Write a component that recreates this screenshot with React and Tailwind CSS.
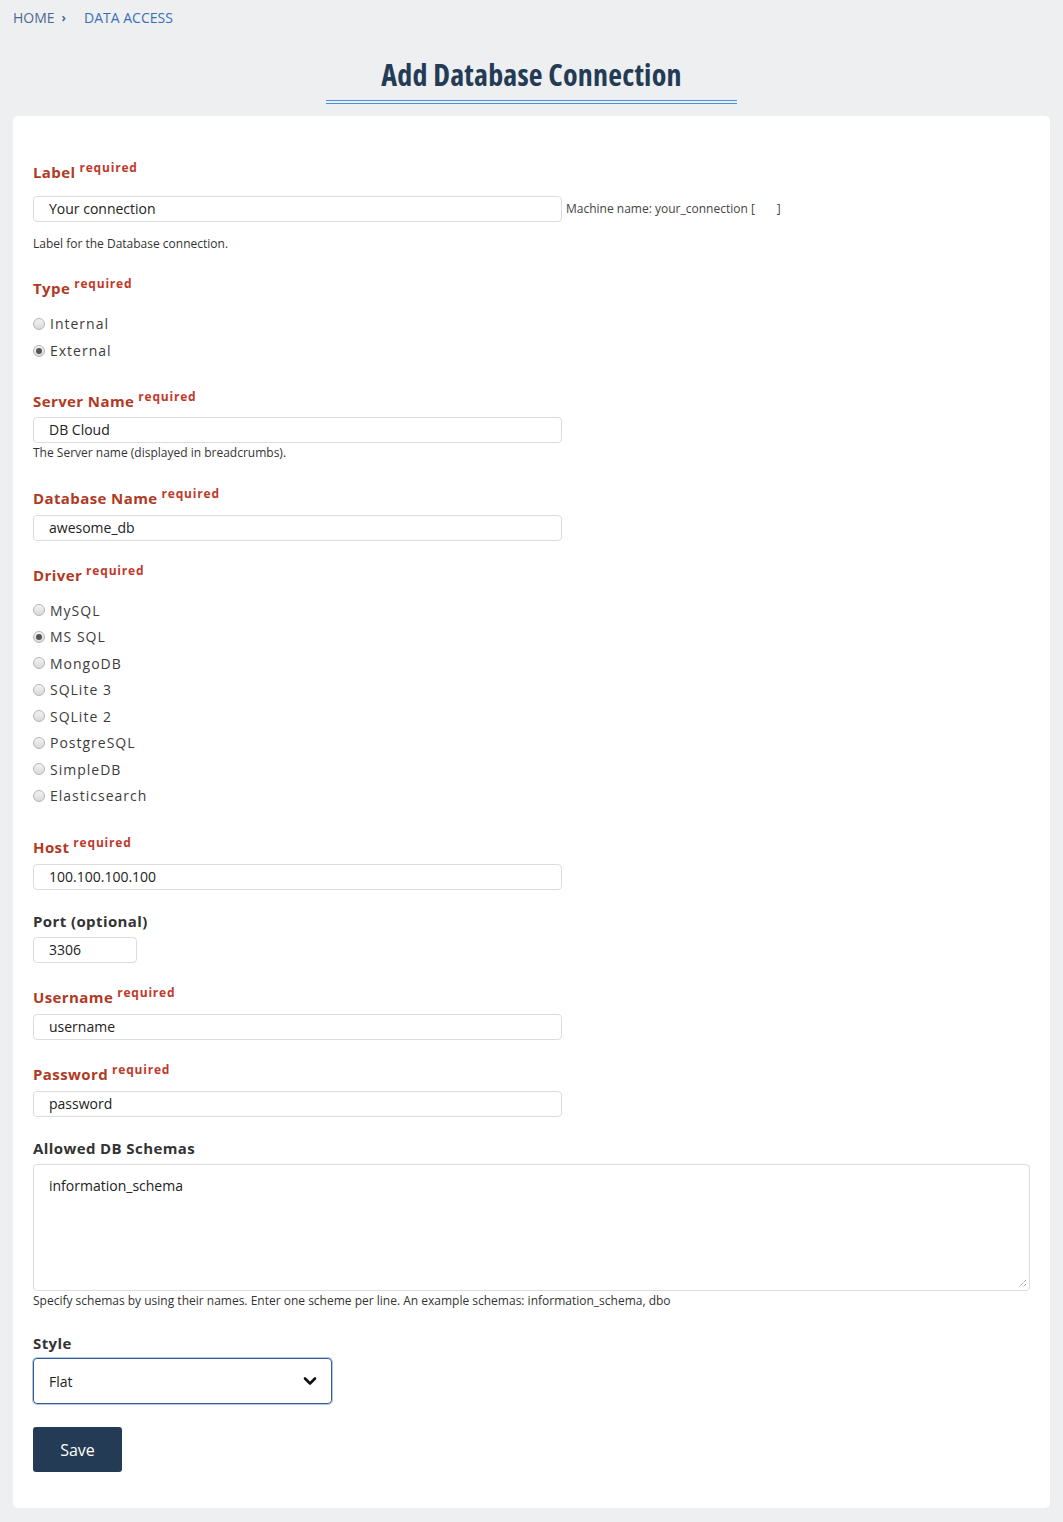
import React from "react";

const font = { fontFamily: '"Open Sans", "Liberation Sans", sans-serif' };

function Req() {
  return (
    <span className="ml-[4px] relative -top-[6px] text-[12px] font-bold tracking-[0.8px] text-[#c0392b]">required</span>
  );
}

function Title({ children, req, dark, className }) {
  return (
    <div className={"h-[20px] leading-[20px] text-[15px] font-bold tracking-[0.4px] " + (dark ? "text-[#333333] " : "text-[#b03a24] ") + (className || "")}>
      {children}
      {req && <Req />}
    </div>
  );
}

function Input({ value, className }) {
  return (
    <div className={"h-[26px] leading-[24px] border border-[#dcdcdc] rounded-[4px] px-[15px] text-[14px] text-[#222] bg-white " + (className || "w-[529px]")}>
      {value}
    </div>
  );
}

function Radio({ label, checked, h }) {
  return (
    <div className={"flex items-center " + h}>
      <span className="w-[12px] h-[12px] rounded-full border border-[#b5b5b5] bg-gradient-to-b from-[#f4f4f4] to-[#d9d9d9] flex items-center justify-center shrink-0">
        {checked && <span className="w-[6px] h-[6px] rounded-full bg-[#555]" />}
      </span>
      <span className="ml-[5px] text-[14px] tracking-[1px] text-[#3c3c3c]">{label}</span>
    </div>
  );
}

function Help({ children, className }) {
  return <div className={"text-[12px] leading-[18px] text-[#333] " + (className || "")}>{children}</div>;
}

export default function App() {
  const drivers = ["MySQL", "MS SQL", "MongoDB", "SQLite 3", "SQLite 2", "PostgreSQL", "SimpleDB", "Elasticsearch"];
  return (
    <div className="min-h-[1522px] bg-[#edeff1] pb-[14px]" style={font}>
      <div className="pt-[8px] px-[13px] h-[28px] flex items-center text-[14px] leading-[20px]">
        <span className="text-[#4d6a92]">HOME</span>
        <span className="ml-[7px] text-[#4d6a92] font-bold text-[12px]">›</span>
        <span className="ml-[18px] text-[#3a6fb5]">DATA ACCESS</span>
      </div>
      <div className="flex flex-col items-center">
        <div className="mt-[27px] h-[40px] leading-[40px] text-[30px] font-bold text-[#243b55] font-stretch-condensed tracking-[0.2px]">
          Add Database Connection
        </div>
        <div className="mt-[5px] w-[411px] h-[1px] bg-[#4a8fe0]" />
        <div className="mt-[2px] w-[411px] h-[1px] bg-[#4a8fe0]" />
      </div>
      <div className="mt-[12px] mx-[13px] bg-white rounded-[5px] px-[20px] pt-[46px] pb-[36px]">
        <Title req>Label</Title>
        <div className="mt-[14px] flex items-center">
          <Input value="Your connection" />
          <span className="ml-[4px] text-[12px] text-[#444]">
            Machine name: your_connection [<span className="inline-block w-[22px]" />]
          </span>
        </div>
        <Help className="mt-[13px]">Label for the Database connection.</Help>

        <Title req className="mt-[25px]">Type</Title>
        <div className="mt-[12px]">
          <Radio label="Internal" h="h-[27px]" />
          <Radio label="External" checked h="h-[27px]" />
        </div>

        <Title req className="mt-[27px]">Server Name</Title>
        <Input value="DB Cloud" className="mt-[6px] w-[529px]" />
        <Help className="mt-[1px]">The Server name (displayed in breadcrumbs).</Help>

        <Title req className="mt-[26px]">Database Name</Title>
        <Input value="awesome_db" className="mt-[7px] w-[529px]" />

        <Title req className="mt-[24px]">Driver</Title>
        <div className="mt-[12px]">
          {drivers.map((d) => (
            <Radio key={d} label={d} checked={d === "MS SQL"} h="h-[26.5px]" />
          ))}
        </div>

        <Title req className="mt-[28px]">Host</Title>
        <Input value="100.100.100.100" className="mt-[7px] w-[529px]" />

        <Title dark className="mt-[21px]">Port (optional)</Title>
        <Input value="3306" className="mt-[6px] w-[104px]" />

        <Title req className="mt-[24px]">Username</Title>
        <Input value="username" className="mt-[7px] w-[529px]" />

        <Title req className="mt-[24px]">Password</Title>
        <Input value="password" className="mt-[7px] w-[529px]" />

        <Title dark className="mt-[21px]">Allowed DB Schemas</Title>
        <div className="mt-[6px] relative h-[127px] border border-[#dcdcdc] rounded-[4px] px-[15px] pt-[10px] text-[14px] leading-[22px] text-[#222]">
          information_schema
          <svg className="absolute right-[2px] bottom-[2px]" width="9" height="9" viewBox="0 0 9 9">
            <path d="M8 1 L1 8 M8 5 L5 8" stroke="#777" strokeWidth="1" strokeDasharray="1 1" />
          </svg>
        </div>
        <Help className="mt-[1px]">Specify schemas by using their names. Enter one scheme per line. An example schemas: information_schema, dbo</Help>

        <Title dark className="mt-[23px]">Style</Title>
        <div className="mt-[5px] w-[299px] h-[46px] border border-[#3a5a8c] rounded-[4px] shadow-[0_0_0_1px_#b3c8ea] flex items-center justify-between pl-[15px] pr-[14px] text-[14px] text-[#222]">
          <span>Flat</span>
          <svg width="14" height="10" viewBox="0 0 14 10">
            <path d="M2 2.5 L7 7.5 L12 2.5" stroke="#111" strokeWidth="2.6" fill="none" strokeLinecap="round" strokeLinejoin="round" />
          </svg>
        </div>

        <div className="mt-[23px] w-[89px] h-[45px] rounded-[3px] bg-[#243b55] text-white text-[16px] flex items-center justify-center">
          Save
        </div>
      </div>
    </div>
  );
}
